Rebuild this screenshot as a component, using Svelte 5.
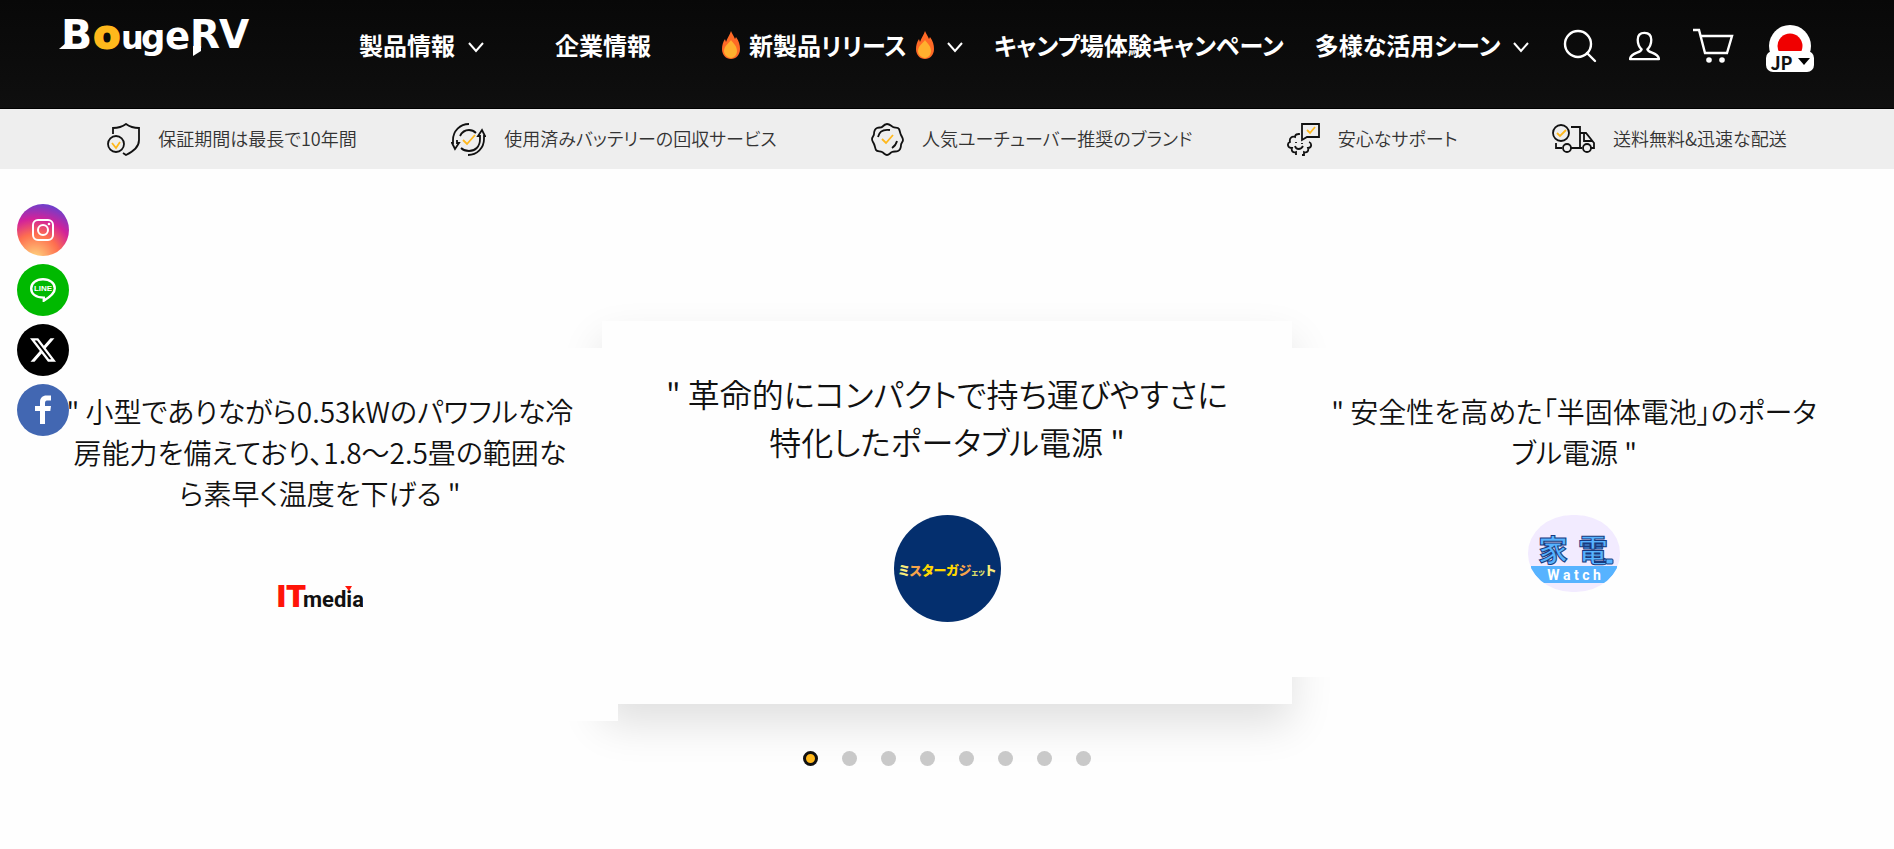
<script lang="ts">
	const navItems = [
		{ label: '製品情報', arrow: true, wide: true },
		{ label: '企業情報', arrow: false, wide: true },
		{ label: '新製品リリース', arrow: true, fire: true },
		{ label: 'キャンプ場体験キャンペーン', arrow: false },
		{ label: '多様な活用シーン', arrow: true }
	];

	const features = [
		{ icon: 'shield', label: '保証期間は最長で10年間' },
		{ icon: 'recycle', label: '使用済みバッテリーの回収サービス' },
		{ icon: 'badge', label: '人気ユーチューバー推奨のブランド' },
		{ icon: 'support', label: '安心なサポート' },
		{ icon: 'truck', label: '送料無料&迅速な配送' }
	];

	let active = $state(0);
</script>

{#snippet fire()}
	<svg width="18" height="28" viewBox="0 0 18 28" aria-hidden="true">
		<path d="M9 0c1 3 3 5 4 8l1-2c3 4 4 8 4 12 0 6-4 10-9 10S0 24 0 18c0-4 1-7 3-10l1 3C5 7 8 4 9 0z" fill="#ff6a26" />
		<path d="M9 9c2 3 6 6 6 11 0 4-3 7-6 7s-7-3-7-7c0-5 5-8 7-11z" fill="#ffb02e" />
	</svg>
{/snippet}

<header>
	<a class="logo" href="/" aria-label="BougeRV">
		<svg width="194" height="60" viewBox="0 -12 194 60" font-family="DejaVu Sans, sans-serif" font-weight="bold" fill="#fff">
			<path d="M0 31l7-6v6z" />
			<text x="2" y="31" font-size="41">B</text>
			<text x="48" y="30" font-size="39" text-anchor="middle" fill="#ffb81c" stroke="#ffb81c" stroke-width="2">o</text>
			<text x="62" y="31" font-size="32">u</text>
			<text x="82" y="31" font-size="34">g</text>
			<text x="106" y="31" font-size="37">e</text>
			<path d="M134 28h8v5l-8 5z" />
			<text x="131" y="30" font-size="39">R</text>
			<text x="160" y="30" font-size="39">V</text>
		</svg>
	</a>

	<nav>
		{#each navItems as item}
			<a href="#nav" class:wide={item.wide}>
				{#if item.fire}{@render fire()}{/if}
				<span>{item.label}</span>
				{#if item.fire}{@render fire()}{/if}
				{#if item.arrow}
					<svg class="arrow" width="16" height="11" viewBox="0 0 16 11"><path d="M1 1l7 8 7-8" fill="none" stroke="#fff" stroke-width="2" /></svg>
				{/if}
			</a>
		{/each}
	</nav>

	<div class="tools">
		<button aria-label="検索">
			<svg width="34" height="34" viewBox="0 0 34 34" fill="none" stroke="#fff" stroke-width="2.4" stroke-linecap="round">
				<circle cx="15" cy="15" r="13" />
				<path d="M24 24l8 8" />
			</svg>
		</button>
		<a href="#account" aria-label="アカウント">
			<svg width="31" height="31" viewBox="0 0 32 32" fill="none" stroke="#fff" stroke-width="2.4" stroke-linejoin="round">
				<path d="M16 2c-5 0-7 3-7 7 0 5 1 7 4 10-1 4-11 3-12 10h30c-1-7-11-6-12-10 3-3 4-5 4-10 0-4-2-7-7-7z" />
			</svg>
		</a>
		<a href="#cart" aria-label="カート">
			<svg width="42" height="36" viewBox="0 0 42 36" fill="none" stroke="#fff" stroke-width="2.4">
				<path d="M1 2h6l6 23h22l5-17H9" />
				<circle cx="17" cy="32" r="2.8" fill="#fff" stroke="none" />
				<circle cx="30" cy="32" r="2.8" fill="#fff" stroke="none" />
			</svg>
		</a>
		<button class="country">
			<svg width="42" height="42" viewBox="0 0 42 42">
				<circle cx="21" cy="21" r="21" fill="#fff" />
				<circle cx="21" cy="21" r="12.5" fill="#f00000" />
			</svg>
			<span>JP
				<svg width="12" height="7" viewBox="0 0 12 7"><path d="M0 0h12L6 7z" /></svg>
			</span>
		</button>
	</div>
</header>

<ul class="features">
	{#each features as f}
		<li>
			{#if f.icon === 'shield'}
				<svg width="33" height="33" viewBox="0 0 33 33">
					<path d="M6 11V5c5 0 9-1 13-4 4 3 8 4 13 4v12c0 7-5 11-13 15l-3-2" />
					<circle cx="9" cy="21" r="8" />
					<path class="tick" d="M5 20l4 5 4-6" />
				</svg>
			{:else if f.icon === 'recycle'}
				<svg width="35" height="33" viewBox="0 0 35 33">
					<path d="M18 1C9 1 2 8 2 17v3H1l3 6 4-6H6v-3M9 13c2-4 5-6 9-6 3 0 5 1 7 3" />
					<path d="M17 32c9 0 16-7 16-16v-3h1l-3-6-4 6h2v3c0 8-5 12-11 12-3 0-6-1-8-3" />
					<path class="tick" d="M12 17l4 4 8-9" />
				</svg>
			{:else if f.icon === 'badge'}
				<svg width="33" height="33" viewBox="0 0 33 33">
					<path d="M16 1c3 0 4 2 6 3s5 0 6 2 1 4 2 6 2 3 2 5-2 3-2 5-1 5-3 6-4 0-6 1-3 3-5 3-3-2-5-3-5 0-6-2-1-4-2-6-2-3-2-5 2-3 2-5 1-5 3-6 4 0 5-1 3-3 5-3z" />
					<path d="M7 14c1-5 5-8 12-7M26 18c-1 4-2 5-5 7" />
					<path class="tick" d="M11 16l4 4 7-8" />
				</svg>
			{:else if f.icon === 'support'}
				<svg width="33" height="33" viewBox="0 0 33 33">
					<path d="M15 17V1h17v13H20z" />
					<path d="M9 32v-3c-3 1-5-1-4-4-5 0-5-5-2-6-1-4 2-6 5-5 0-3 2-3 4-3v-1M15 32h2v-3c3 1 5-1 4-4 4 0 4-5 1-6M8 23c1 4 6 4 8 0M9 19v1M15 20v1" />
					<path class="tick" d="M20 7l3 3 5-6" />
				</svg>
			{:else}
				<svg width="43" height="30" viewBox="0 0 43 30">
					<circle cx="9" cy="9" r="8" />
					<path d="M19 3h9v21M4 19v5h6M19 24h11M28 9h6l8 10v5h-3M32 9v8h8" />
					<circle cx="15" cy="24" r="4" />
					<circle cx="35" cy="24" r="4" />
					<path class="tick" d="M5 9l3 3 6-6" />
				</svg>
			{/if}
			<span>{f.label}</span>
		</li>
	{/each}
</ul>

<main>
	<section class="reviews">
		<blockquote class="card">
			<p>" 小型でありながら0.53kWのパワフルな冷房能力を備えており、1.8～2.5畳の範囲なら素早く温度を下げる "</p>
			<svg width="86" height="80" viewBox="0 0 86 80">
				<text x="0" y="51" class="it">IT</text>
				<text x="26" y="51" class="media">media</text>
				<path d="M68 30h7l-3 5z" fill="#ff1408" />
			</svg>
		</blockquote>

		<blockquote class="card current">
			<p>" 革命的にコンパクトで持ち運びやすさに特化したポータブル電源 "</p>
			<svg width="107" height="107" viewBox="0 0 107 107">
				<circle cx="53.5" cy="53.5" r="53.5" fill="#042f6e" />
				<text class="gadget" x="53" y="60"><tspan fill="#f8ec7a">ミ</tspan><tspan fill="#f6a44a">ス</tspan><tspan fill="#ffd800">ターガ</tspan><tspan fill="#f6a44a">ジ</tspan><tspan class="small" fill="#d9dc6a">ェッ</tspan><tspan fill="#f8ec7a">ト</tspan></text>
			</svg>
		</blockquote>

		<blockquote class="card">
			<p>" 安全性を高めた「半固体電池」のポータブル電源 "</p>
			<svg width="92" height="77" viewBox="0 0 92 77">
				<clipPath id="oval"><rect width="92" height="77" rx="44" ry="38" /></clipPath>
				<g clip-path="url(#oval)">
					<rect width="92" height="77" fill="#f2ebff" />
					<path d="M3 51h86v4L78 68H14L3 55z" fill="#57b3ff" />
					<text class="kaden" x="10" y="46">家</text>
					<text class="kaden" x="50" y="46">電</text>
					<path d="M66 47h12" stroke="#173a80" stroke-width="2" />
					<rect x="78" y="44" width="7" height="5" rx="1" fill="#57b3ff" stroke="#173a80" />
					<text class="watch" x="46" y="65">W a t c h</text>
				</g>
			</svg>
		</blockquote>
	</section>

	<div class="dots">
		{#each Array(8) as _, i}
			<button class:active={i === active} aria-label="スライド {i + 1}" onclick={() => (active = i)}></button>
		{/each}
	</div>
</main>

<aside class="social">
	<a class="instagram" href="#instagram" aria-label="Instagram">
		<svg width="22" height="22" viewBox="0 0 22 22" fill="none" stroke="#fff" stroke-width="2">
			<rect x="1" y="1" width="20" height="20" rx="5" />
			<circle cx="11" cy="11" r="5" />
			<circle cx="17" cy="5" r="1.3" fill="#fff" stroke="none" />
		</svg>
	</a>
	<a class="line" href="#line" aria-label="LINE">
		<svg width="26" height="24" viewBox="0 0 26 24">
			<path d="M13 1.2c7 0 11.8 4 11.8 9.2 0 5-5 8.6-11 12.2v-3C6 19.5 1.2 16 1.2 10.4 1.2 5.2 6 1.2 13 1.2z" fill="none" stroke="#fff" stroke-width="2.4" />
			<text x="13" y="13" text-anchor="middle">LINE</text>
		</svg>
	</a>
	<a class="x" href="#x" aria-label="X">
		<svg width="26" height="26" viewBox="0 0 24 24" fill="#fff">
			<path d="M18.9 1.15h3.68l-8.04 9.19L24 22.85h-7.41l-5.8-7.59-6.64 7.59H.47l8.6-9.83L0 1.15h7.59l5.24 6.93zM17.61 20.64h2.04L6.49 3.24H4.3z" />
		</svg>
	</a>
	<a class="facebook" href="#facebook" aria-label="Facebook">
		<svg width="16" height="30" viewBox="0 0 16 30" fill="#fff">
			<path d="M5 29V16H0v-5h5V7c0-4 2.5-6.5 6.5-6.5H16v5h-3c-2 0-3 .5-3 2.5v3h6l-.7 5H10v13z" />
		</svg>
	</a>
</aside>

<style>
	:global(body) {
		background: #fefefe;
		color: #111;
		font-family: 'Noto Sans CJK JP', sans-serif;
		font-feature-settings: 'palt';
	}
	header {
		display: flex;
		height: 92px;
		padding: 0 80px 16px 59px;
		align-items: center;
		background: linear-gradient(#080808, #0f0f0f);
		border-bottom: 1px solid #000;
	}
	header a {
		color: #fff;
		text-decoration: none;
	}
	button {
		padding: 0;
		border: 0;
		background: none;
		font: inherit;
		cursor: pointer;
	}
	svg {
		display: block;
		flex-shrink: 0;
	}
	.logo {
		align-self: flex-start;
		padding-top: 6px;
	}
	nav {
		display: flex;
		flex: 1;
		margin-left: 106px;
		padding-bottom: 2px;
		gap: 31px;
	}
	nav a {
		display: flex;
		align-items: center;
		gap: 9px;
		font-size: 24px;
		font-weight: 700;
		line-height: 36px;
		white-space: nowrap;
	}
	nav a.wide {
		margin-right: 40px;
	}
	.arrow {
		margin: 4px 0 0 4px;
	}
	.tools {
		display: flex;
		align-items: center;
		gap: 32px;
	}
	.country {
		position: relative;
		width: 48px;
		height: 48px;
		padding: 0 3px;
	}
	.country span {
		position: absolute;
		left: 0;
		bottom: -2px;
		display: flex;
		align-items: center;
		justify-content: center;
		gap: 5px;
		width: 48px;
		height: 21px;
		border-radius: 7px;
		background: #fff;
		color: #111;
		font-size: 18px;
		font-weight: 700;
		line-height: 20px;
	}
	.features {
		display: flex;
		justify-content: space-around;
		height: 60px;
		margin: 0;
		padding: 0 60px;
		background: #eee;
		list-style: none;
	}
	.features li {
		display: flex;
		align-items: center;
		gap: 18px;
		font-size: 18px;
		font-weight: 350;
		color: #333;
		white-space: nowrap;
	}
	.features span {
		padding-bottom: 2px;
	}
	.features svg {
		fill: none;
		stroke: #111;
		stroke-width: 1.8;
	}
	.features .tick {
		stroke: #ffb81c;
	}
	.reviews {
		display: flex;
		align-items: flex-start;
		padding: 152px 22px 0;
	}
	.card {
		position: relative;
		z-index: 1;
		display: flex;
		flex: 596 1 0;
		flex-direction: column;
		align-items: center;
		box-sizing: border-box;
		margin: 27px 0 0;
		padding: 43px 44px 85px;
		gap: 42px;
		background: #fefefe;
		font-size: 28px;
		font-weight: 350;
		line-height: 41px;
		text-align: center;
	}
	.card.current {
		z-index: 0;
		flex-grow: 688;
		margin: 0 -16px;
		padding: 48px 52px 82px;
		gap: 50px;
		font-size: 32px;
		line-height: 48px;
		box-shadow: 0 20px 40px rgba(0, 0, 0, 0.12);
	}
	.card p {
		margin: 0;
	}
	.it {
		fill: #ff1408;
		font: 900 30px Inter, sans-serif;
	}
	.media {
		fill: #111;
		font: 700 22px Roboto, sans-serif;
	}
	.gadget {
		font-size: 13px;
		font-weight: 900;
		text-anchor: middle;
	}
	.gadget .small {
		font-size: 8px;
	}
	.kaden {
		fill: #57b3ff;
		stroke: #173a80;
		stroke-width: 1;
		font-size: 30px;
		font-weight: 700;
	}
	.watch {
		fill: #fff;
		font: 700 14px Roboto, sans-serif;
		text-anchor: middle;
	}
	.dots {
		position: relative;
		z-index: 2;
		display: flex;
		justify-content: center;
		gap: 24px;
		padding: 30px 0 80px;
	}
	.dots button {
		width: 15px;
		height: 15px;
		border-radius: 50%;
		background: #c9c9c9;
	}
	.dots button.active {
		border: 3px solid #111;
		background: #ffb81c;
	}
	.social {
		position: fixed;
		z-index: 3;
		top: 204px;
		left: 17px;
		display: flex;
		flex-direction: column;
		gap: 8px;
	}
	.social a {
		display: flex;
		align-items: center;
		justify-content: center;
		width: 52px;
		height: 52px;
		border-radius: 50%;
	}
	.social .instagram {
		background: radial-gradient(circle at 35% 105%, #fed980 0%, #fe6f4f 38%, #d2229a 62%, #5546d8 92%);
	}
	.social .line {
		background: #00b900;
	}
	.line text {
		fill: #fff;
		font: 700 8px 'Liberation Sans', sans-serif;
	}
	.social .x {
		background: #000;
	}
	.social .facebook {
		background: #4267b2;
	}
</style>
